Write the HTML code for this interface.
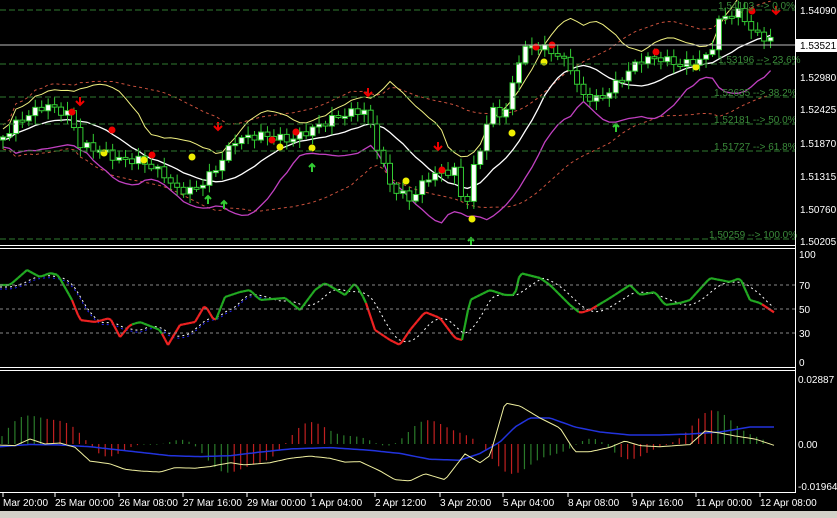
<!DOCTYPE html>
<html><head><meta charset="utf-8"><style>
html,body{margin:0;padding:0;background:#000;width:837px;height:518px;overflow:hidden}
svg{display:block}
text{font-family:"Liberation Sans",sans-serif;font-size:10px}
</style></head><body>
<svg id="s" width="837" height="518" xmlns="http://www.w3.org/2000/svg">
<rect width="837" height="518" fill="#000"/>
<g id="g"></g>
<g stroke="#2f7a2f" stroke-dasharray="6,3" stroke-width="1">
<line x1="0" y1="10" x2="795" y2="10"/><line x1="0" y1="64" x2="795" y2="64"/>
<line x1="0" y1="97" x2="795" y2="97"/><line x1="0" y1="124" x2="795" y2="124"/>
<line x1="0" y1="151" x2="795" y2="151"/><line x1="0" y1="239" x2="795" y2="239"/>
</g>
<g fill="#3a8a3a" font-size="10">
<text x="718" y="9">1.54103 --&gt; 0.0%</text>
<text x="718" y="63">1.53196 --&gt; 23.6%</text>
<text x="714" y="96">1.52635 --&gt; 38.2%</text>
<text x="714" y="123">1.52181 --&gt; 50.0%</text>
<text x="714" y="150">1.51727 --&gt; 61.8%</text>
<text x="709" y="238">1.50259 --&gt; 100.0%</text>
</g>
<line x1="0" y1="45" x2="795" y2="45" stroke="#bbb"/>
<g stroke="#888" stroke-dasharray="3,3">
<line x1="0" y1="285" x2="795" y2="285"/><line x1="0" y1="309" x2="795" y2="309"/><line x1="0" y1="333" x2="795" y2="333"/>
</g>
<g stroke="#fff">
<line x1="0" y1="245.5" x2="795" y2="245.5"/><line x1="0" y1="248.5" x2="795" y2="248.5"/>
<line x1="0" y1="367.5" x2="795" y2="367.5"/><line x1="0" y1="370.5" x2="795" y2="370.5"/>
<line x1="0" y1="492.5" x2="795" y2="492.5"/>
<line x1="795.5" y1="0" x2="795.5" y2="493"/>
</g>
<rect x="0" y="511" width="837" height="7" fill="#d4d0c8"/>
<g fill="#fff">
<text x="800" y="14">1.54090</text>
<text x="800" y="81">1.52980</text><text x="800" y="113">1.52425</text><text x="800" y="147">1.51870</text>
<text x="800" y="180">1.51315</text><text x="800" y="213">1.50760</text><text x="800" y="245">1.50205</text>
<text x="799" y="258">100</text><text x="799" y="289">70</text><text x="799" y="313">50</text><text x="799" y="337">30</text><text x="799" y="366">0</text>
<text x="798" y="383">0.02887</text><text x="798" y="448">0.00</text><text x="798" y="490">-0.01964</text>
</g>
<rect x="796" y="39" width="41" height="13" fill="#fff"/>
<text x="800" y="49" fill="#000">1.53521</text>
<g fill="#fff" font-size="10">
<text x="3" y="506">Mar 20:00</text><text x="55" y="506">25 Mar 00:00</text><text x="119" y="506">26 Mar 08:00</text>
<text x="183" y="506">27 Mar 16:00</text><text x="247" y="506">29 Mar 00:00</text><text x="311" y="506">1 Apr 04:00</text>
<text x="375" y="506">2 Apr 12:00</text><text x="440" y="506">3 Apr 20:00</text><text x="503" y="506">5 Apr 04:00</text>
<text x="568" y="506">8 Apr 08:00</text><text x="632" y="506">9 Apr 16:00</text><text x="696" y="506">11 Apr 00:00</text>
<text x="760" y="506">12 Apr 08:00</text>
</g>
</svg>
<script>
(function(){
var NS="http://www.w3.org/2000/svg",G=document.getElementById('g');
function el(t,a){var e=document.createElementNS(NS,t);for(var k in a)e.setAttribute(k,a[k]);G.appendChild(e);return e;}
function interp(p,x){for(var i=0;i<p.length-1;i++){if(x<=p[i+1][0]){var t=(x-p[i][0])/(p[i+1][0]-p[i][0]);return p[i][1]+t*(p[i+1][1]-p[i][1]);}}return p[p.length-1][1];}
var P=[[0,140],[20,120],[45,105],[70,115],[80,145],[100,150],[120,160],[140,160],[165,175],[175,190],[195,190],[215,170],[235,140],[260,135],[290,140],[320,125],[340,115],[365,110],[375,140],[390,185],[410,200],[430,175],[455,170],[465,215],[470,180],[480,150],[490,110],[505,115],[520,55],[530,45],[550,50],[570,65],[580,95],[600,100],[620,80],[640,60],[660,58],[680,65],[700,60],[710,55],[720,18],[740,12],[755,35],[775,40]];
var N=120,xs=[],cl=[];
for(var i=0;i<N;i++){var x=3+i*6.45;xs.push(x);cl.push(interp(P,x)+Math.sin(i*2.3)*4);}
function ma(a,n){var r=[];for(var i=0;i<a.length;i++){var s=0,c=0;for(var j=Math.max(0,i-n+1);j<=i;j++){s+=a[j];c++;}r.push(s/c);}return r;}
function sd(a,m,n){var r=[];for(var i=0;i<a.length;i++){var s=0,c=0;for(var j=Math.max(0,i-n+1);j<=i;j++){s+=(a[j]-m[i])*(a[j]-m[i]);c++;}r.push(Math.sqrt(s/c));}return r;}
function line(xa,ya,col,w,dash){var d='';for(var i=0;i<xa.length;i++)d+=(i?'L':'M')+xa[i].toFixed(1)+' '+ya[i].toFixed(1);var a={d:d,stroke:col,fill:'none','stroke-width':w||1};if(dash)a['stroke-dasharray']=dash;el('path',a);}
var m=ma(cl,12),s=sd(cl,m,12),m2=ma(cl,24),s2=sd(cl,m2,24);
function cap(v){return Math.max(-5,Math.min(250,v));}
line(xs,m2.map(function(v,i){return cap(v-Math.min(2*s2[i],35)-12);}),'#c8503c',1,'3,3');
line(xs,m2.map(function(v,i){return cap(v+Math.min(2*s2[i],35)+12);}),'#c8503c',1,'3,3');
line(xs,m.map(function(v,i){return v-Math.min(1.8*s[i],40)-8;}),'#f0f080',1);
line(xs,m.map(function(v,i){return v+Math.min(1.8*s[i],40)+10;}),'#c040c0',1.3);
line(xs,m.map(function(v){return v+3;}),'#fff',1.3);
for(var i=0;i<N;i++){var o=i?cl[i-1]:cl[0]+3,c=cl[i],cx=xs[i];var wt=Math.min(o,c)-2-Math.abs(Math.sin(i*1.7))*7,wb=Math.max(o,c)+2+Math.abs(Math.cos(i*1.3))*7;
el('line',{x1:cx,y1:wt,x2:cx,y2:wb,stroke:'#3c3',"stroke-width":1});
var h=Math.max(2,Math.abs(o-c));el('rect',{x:cx-2.5,y:Math.min(o,c),width:5,height:h,fill:c<o?'#fff':'#000',stroke:'#3c3'});}
var dots=[[72,112,'r'],[112,130,'r'],[104,153,'y'],[144,160,'y'],[152,155,'r'],[192,157,'y'],[272,140,'r'],[280,147,'y'],[296,132,'r'],[312,148,'y'],[406,181,'y'],[442,170,'r'],[472,219,'y'],[512,133,'y'],[536,47,'r'],[544,62,'y'],[552,45,'r'],[656,52,'r'],[696,67,'y'],[752,11,'r']];
dots.forEach(function(d){el('circle',{cx:d[0],cy:d[1],r:3.5,fill:d[2]=='r'?'#e00':'#ee0'});});
[[80,105],[218,130],[368,96],[438,150],[776,14]].forEach(function(a){el('path',{d:'M'+a[0]+' '+(a[1]-8)+'V'+a[1]+'M'+(a[0]-4)+' '+(a[1]-4)+'L'+a[0]+' '+a[1]+'L'+(a[0]+4)+' '+(a[1]-4),stroke:'#e00','stroke-width':2,fill:'none'});});
[[208,200],[224,205],[312,168],[471,242],[616,128]].forEach(function(a){el('path',{d:'M'+a[0]+' '+(a[1]+4)+'V'+(a[1]-4)+'M'+(a[0]-3)+' '+(a[1]-1)+'L'+a[0]+' '+(a[1]-4)+'L'+(a[0]+3)+' '+(a[1]-1),stroke:'#3c3','stroke-width':2,fill:'none'});});
var R=[[0,285],[10,285],[27,270],[40,277],[50,273],[58,275],[72,300],[80,320],[95,322],[110,318],[120,337],[130,325],[140,322],[160,330],[168,345],[180,325],[195,322],[205,305],[215,322],[225,297],[240,292],[250,290],[260,300],[285,298],[300,310],[315,290],[325,283],[345,295],[355,283],[365,300],[375,330],[390,340],[400,345],[410,330],[425,312],[440,318],[455,338],[462,340],[470,300],[490,290],[505,295],[515,295],[520,273],[540,278],[550,285],[570,305],[580,313],[590,310],[610,298],[630,285],[640,295],[655,292],[665,305],[680,303],[690,300],[710,278],[730,282],[740,278],[750,300],[760,303],[775,313]];
var rx=[],ry=[];for(var x=0;x<=775;x+=3){rx.push(x);ry.push(interp(R,x));}
var sg=ma(ry,9);line(rx,sg.map(function(v){return v+2;}),'#fff',1,'2,3');line(rx.slice(0,90),sg.slice(0,90).map(function(v){return v+4;}),'#22f',1,'2,3');
var red=[[72,130],[160,215],[365,462],[578,595],[760,776]];
function isRed(x){return red.some(function(r){return x>=r[0]&&x<r[1];});}
for(var i=0;i<rx.length-1;i++)el('line',{x1:rx[i],y1:ry[i],x2:rx[i+1],y2:ry[i+1],stroke:isRed(rx[i])?'#e22':'#2a2',"stroke-width":2.2});
var ylY=[[0,446],[15,447],[30,439],[45,444],[60,443],[75,450],[90,475],[110,480],[125,490],[140,493],[160,495],[175,487],[195,488],[210,485],[230,478],[245,482],[270,478],[290,470],[310,466],[330,470],[345,477],[360,476],[380,493],[395,509],[410,511],[425,498],[445,509],[465,462],[480,478],[490,465],[505,403],[520,406],[540,418],[560,428],[575,458],[590,458],[610,450],[625,441],[640,447],[660,449],[675,447],[690,445],[705,431],[720,433],[735,436],[755,439],[775,447]];
var yl2=ylY.map(function(a){return [a[0],a[1]>444?444+(a[1]-444)*0.55:a[1]];});
var bl=[[0,450],[30,445],[60,443],[90,450],[130,460],[170,470],[200,472],[230,470],[260,462],[290,455],[330,452],[370,458],[400,465],[430,478],[460,480],[480,465],[500,440],[515,425],[530,416],[550,416],[575,425],[600,430],[630,433],[660,433],[690,432],[720,430],[750,425],[775,425]];
var bl2=bl.map(function(a){return [a[0],a[1]>444?444+(a[1]-444)*0.45:a[1]+2];});
for(var i=0;i<120;i++){var hx=2+i*6.45;var v=Math.sin(i*0.21+0.3)*Math.sin(i*0.09+1.1)*30+Math.sin(i*0.7)*4;var up=Math.cos(i*0.21+0.3)>0;
el('line',{x1:hx,y1:444,x2:hx,y2:444-v,stroke:up?'#2a7a2a':'#c02020',"stroke-width":1.2});}
var bx=[],by=[],yy=[];for(var x=0;x<=775;x+=3){bx.push(x);by.push(interp(bl2,x));yy.push(interp(yl2,x));}
line(bx,by,'#2233dd',1.5);line(bx,yy,'#f0f0a0',1);
[3,55,119,183,247,311,375,440,503,568,632,696,760].forEach(function(x){el('line',{x1:x,y1:493,x2:x,y2:497,stroke:'#fff'});});
})();
</script>
</body></html>
